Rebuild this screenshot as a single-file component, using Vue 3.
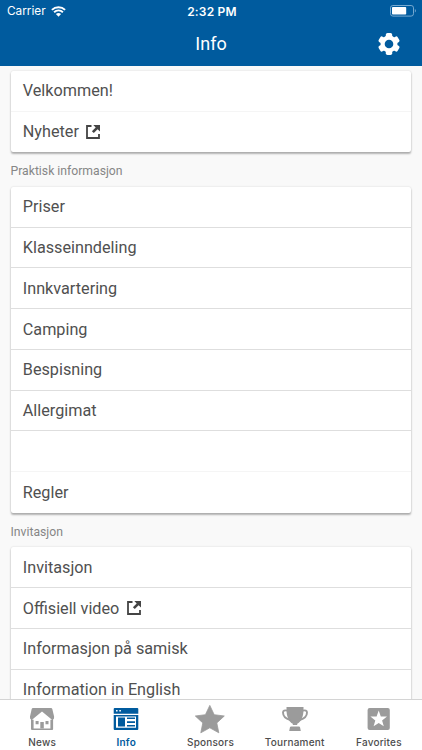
<script setup>
const groups = [
  { title: '', rows: [{ text: 'Velkommen!', soft: true }, { text: 'Nyheter', link: true }] },
  {
    title: 'Praktisk informasjon',
    rows: [
      { text: 'Priser' }, { text: 'Klasseinndeling' }, { text: 'Innkvartering' }, { text: 'Camping' },
      { text: 'Bespisning' }, { text: 'Allergimat' }, { text: '', soft: true }, { text: 'Regler' },
    ],
  },
  {
    title: 'Invitasjon',
    rows: [
      { text: 'Invitasjon' }, { text: 'Offisiell video', link: true },
      { text: 'Informasjon på samisk' }, { text: 'Information in English' }, { text: '' },
    ],
  },
]
const tabs = ['News', 'Info', 'Sponsors', 'Tournament', 'Favorites']
</script>

<template>
  <div class="screen">
    <header class="header">
      <div class="status">
        <div class="carrier">
          <span>Carrier</span>
          <svg class="wifi" viewBox="0 0 15 11">
            <path d="M.9 3.9a9.4 9.4 0 0 1 13.2 0M3.1 6.2a6.3 6.3 0 0 1 8.8 0" fill="none" stroke="#fff" stroke-width="1.9" />
            <path d="M7.5 10.7 4.9 8.1a3.8 3.8 0 0 1 5.2 0z" fill="#fff" />
          </svg>
        </div>
        <span class="time">2:32 PM</span>
        <svg class="battery" viewBox="0 0 27 12">
          <rect x=".5" y=".5" width="23" height="10.6" rx="2.4" fill="none" stroke="#76a9d0" />
          <rect x="2" y="2" width="14.2" height="7.6" rx=".8" fill="#fff" />
          <path d="M24.9 4.1c1.3.4 1.3 3 0 3.4z" fill="#76a9d0" />
        </svg>
      </div>
      <div class="titlebar">
        <h1>Info</h1>
        <svg class="gear" viewBox="-11 -11 22 22">
          <g fill="#fff">
            <circle r="8.5" />
            <rect x="-3.2" y="-10.9" width="6.4" height="21.8" rx="1.7" />
            <rect x="-3.2" y="-10.9" width="6.4" height="21.8" rx="1.7" transform="rotate(60)" />
            <rect x="-3.2" y="-10.9" width="6.4" height="21.8" rx="1.7" transform="rotate(120)" />
          </g>
          <circle r="4.3" fill="#005b9e" />
        </svg>
      </div>
    </header>

    <main class="content">
      <section v-for="(group, i) in groups" :key="i">
        <h2 v-if="group.title">{{ group.title }}</h2>
        <div class="card">
          <div v-for="(row, j) in group.rows" :key="j" class="row" :class="{ soft: row.soft }">
            <span>{{ row.text }}</span>
            <svg v-if="row.link" class="external" viewBox="0 0 14 14">
              <path d="M5.5 1H1v12h12V9" fill="none" stroke="#444" stroke-width="1.8" />
              <path d="M7.3 0H14v6.6l-2.4-2.4-3.8 3.9-1.9-1.9 3.8-3.8z" fill="#444" />
            </svg>
          </div>
        </div>
      </section>
    </main>

    <nav class="tabs">
      <div v-for="tab in tabs" :key="tab" class="tab" :class="{ active: tab === 'Info' }">
        <svg v-if="tab === 'News'" viewBox="0 0 32 30">
          <path d="M7 4h18q1 0 1.3 1l1.8 7.5q.3 2.3-1 3V25q0 1-1 1H6q-1 0-1-1v-9.500q-1.300-.7-1-3L5.700 5q.3-1 1.300-1z" />
          <path d="M16 7.500 6 15.700h1.600v8.800h16.800v-8.800H26z" fill="#fff" />
          <path d="M9.600 17h3v3.200h-3zM19.500 17h3v3.200h-3zM14.300 18h3.500v6.600h-3.500z" />
        </svg>
        <svg v-else-if="tab === 'Info'" viewBox="0 0 32 30">
          <path fill-rule="evenodd" d="M4.7 4h22.600q1 0 1 1v4.700H3.700V5q0-1 1-1zM6 6v1.600h1.600V6zm3.300 0v1.600h1.600V6zM3.700 11h24.600v14q0 1-1 1H4.700q-1 0-1-1zM6 12.600v11.200h20v-11.200z" />
          <path d="M8 13.500h7v9H8zM17 13.500h8v1.600h-8zM17 17.300h8v1.600h-8zM17 21h8v1.600h-8z" />
        </svg>
        <svg v-else-if="tab === 'Sponsors'" viewBox="0 0 32 30">
          <path d="m15.800 1.400 4.400 9.300 10.100 1.300-7.500 6.900 2 9.900-9-5-9 5 2-9.900L1.300 12l10.100-1.300z" stroke="#9b9b9b" stroke-width=".8" stroke-linejoin="round" />
        </svg>
        <svg v-else-if="tab === 'Tournament'" viewBox="0 0 32 30">
          <path d="M7.500 3h17v2.500c0 7.500-2.500 12.500-6.300 14.200v1.200h-4.400v-1.200C10 18 7.500 13 7.500 5.500zM12.100 22.500h7.800q1 0 1.200 1l.7 3.500H10.200l.7-3.500q.2-1 1.200-1z" />
          <path d="M8.500 6.700Q4 5.600 4 8.600c0 4 3.500 6.400 7.300 7.400M23.500 6.700Q28 5.600 28 8.600c0 4-3.500 6.400-7.300 7.400" fill="none" stroke="#9b9b9b" stroke-width="1.900" />
        </svg>
        <svg v-else viewBox="0 0 32 30">
          <rect x="4.600" y="4" width="22.200" height="22" rx="2" />
          <path d="m15.700 6.600 2.100 5.800 6.200.2-4.900 3.800 1.700 5.900-5.100-3.400-5.100 3.400 1.700-5.900-4.900-3.800 6.200-.2z" fill="#fff" />
        </svg>
        <span>{{ tab }}</span>
      </div>
    </nav>
  </div>
</template>

<style>
html, body { margin: 0; overflow: hidden; }
</style>

<style scoped>
.screen {
  width: 422px;
  height: 750px;
  display: flex;
  flex-direction: column;
  overflow: hidden;
  background: #f9f9f9;
  font-family: Roboto, sans-serif;
}
.header { height: 65.5px; flex: none; background: #005b9e; color: #fff; }
.status {
  height: 22px;
  display: grid;
  grid-template-columns: 1fr auto 1fr;
  align-items: center;
  padding: 0 5px 0 7px;
  font-family: Inter, sans-serif;
  font-size: 12px;
}
.carrier { display: flex; align-items: center; gap: 5px; font-size: 11.8px; }
.wifi { width: 15px; height: 11px; }
.time { font-weight: 600; letter-spacing: .2px; }
.battery { width: 27px; height: 12px; justify-self: end; }
.titlebar { height: 43px; display: grid; grid-template-columns: 1fr auto 1fr; align-items: center; padding: 0 22.5px; }
h1 { margin: 0; grid-column: 2; font-size: 18px; line-height: 42px; font-weight: 400; }
.gear { width: 22px; height: 22px; justify-self: end; }
.content { flex: 1; min-height: 0; overflow: hidden; padding: 5.4px 10.7px 0 10.5px; }
h2 { margin: 0; height: 34.7px; line-height: 38px; font-size: 12.2px; font-weight: 400; color: #868686; }
.card {
  background: #fff;
  border-radius: 2px;
  box-shadow: 0 2px 2px rgba(0, 0, 0, .28), 0 0 2px rgba(0, 0, 0, .16);
}
.row {
  box-sizing: border-box;
  height: 40.73px;
  display: flex;
  align-items: center;
  gap: 7.5px;
  padding-left: 12.3px;
  border-bottom: 1px solid #dedede;
  color: #505050;
  font-size: 16.22px;
}
.row.soft { border-bottom-color: #f5f5f5; }
.row:last-child { border-bottom: 0; }
.external { width: 14px; height: 14px; }
.tabs {
  box-sizing: border-box;
  height: 51px;
  flex: none;
  display: grid;
  grid-template-columns: repeat(5, 1fr);
  padding-right: 1px;
  border-top: 1px solid #d4d4d4;
  background: #fff;
}
.tab {
  display: flex;
  flex-direction: column;
  align-items: center;
  padding-top: 4px;
  color: #4d4d4d;
  font-family: Inter, sans-serif;
  font-size: 10px;
  line-height: 16px;
  font-weight: 500;
  letter-spacing: .2px;
}
.tab svg { width: 32px; height: 30px; fill: #9b9b9b; }
.tab.active { color: #005b9e; font-weight: 600; }
.tab.active svg { fill: #005b9e; }
</style>
